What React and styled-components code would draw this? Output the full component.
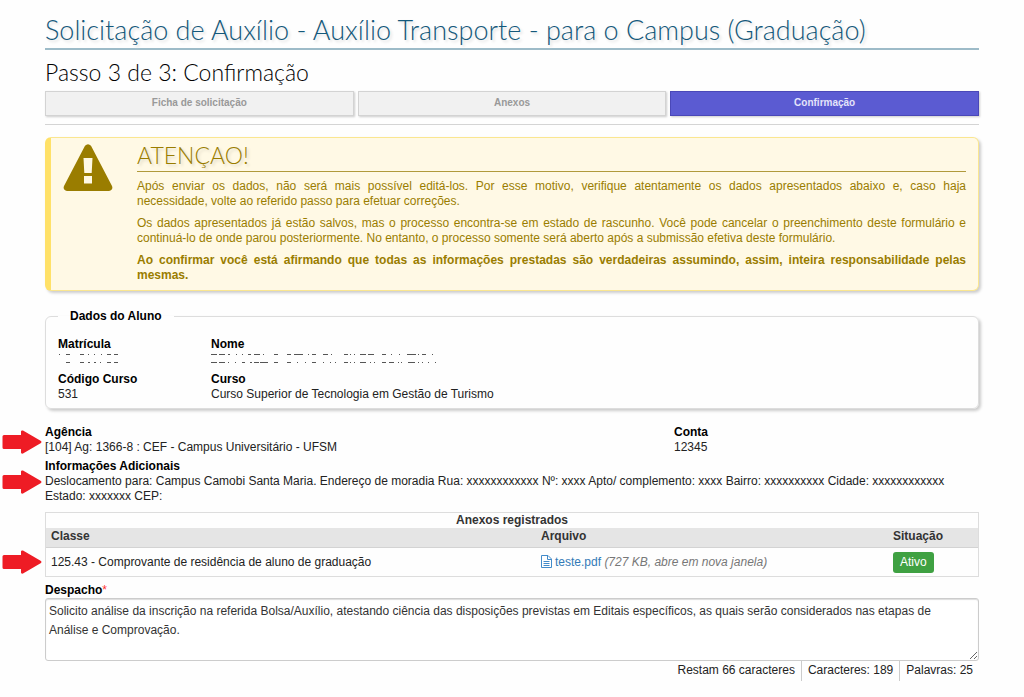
import { useState } from "react";
import styled, { createGlobalStyle } from "styled-components";

const DESPACHO =
  "Solicito análise da inscrição na referida Bolsa/Auxílio, atestando ciência das disposições previstas em Editais específicos, as quais serão considerados nas etapas de Análise e Comprovação.";

const LIMIT = 255;

const steps = ["Ficha de solicitação", "Anexos", "Confirmação"];

const attachments = [
  {
    id: 1,
    type: "125.43 - Comprovante de residência de aluno de graduação",
    file: "teste.pdf",
    info: "(727 KB, abre em nova janela)",
    status: "Ativo",
  },
];

const Arrow = () => (
  <ArrowIcon viewBox="0 0 40 24" aria-hidden="true">
    <path
      d="M2 5h17V1.500Q19 0 21 .5L39 11q1 1 0 2L21 23.500q-2 .5-2-1V19H2q-1.500 0-1.500-1.500v-11Q.5 5 2 5z"
      fill="#ee1c25"
    />
  </ArrowIcon>
);

const FileIcon = () => (
  <FileSvg viewBox="0 0 11 13" aria-hidden="true">
    <path d="M.5.5h6.500l3.500 3.500v8.500H.5z" fill="#fff" stroke="#428bca" />
    <path d="M6.500.5V4.500h4M2.500 6.500h6M2.500 8.500h6M2.500 10.500h6" fill="none" stroke="#428bca" />
  </FileSvg>
);

const App = () => {
  const [text, setText] = useState(DESPACHO);
  const words = text.split(/\s+/).filter(Boolean).length;

  return (
    <Page>
      <GlobalStyle />
      <Title>Solicitação de Auxílio - Auxílio Transporte - para o Campus (Graduação)</Title>
      <Subtitle>Passo 3 de 3: Confirmação</Subtitle>
      <Steps>
        {steps.map((step, i) => (
          <Step key={step} type="button" $active={i === 2}>{step}</Step>
        ))}
      </Steps>

      <Alert role="alert">
        <WarningIcon viewBox="0 0 50 47" aria-hidden="true">
          <path
            fillRule="evenodd"
            d="M22 1.800Q25-1.500 28 1.800L49 42q1.500 4-3 5H4q-4.500-1-3-5zM20.500 14l.8 15h7.400l.8-15zM21 32v7.500h8V32z"
            fill="#9a7d00"
          />
        </WarningIcon>
        <AlertBody>
          <AlertTitle>ATENÇAO!</AlertTitle>
          <AlertText>
            Após enviar os dados, não será mais possível editá-los. Por esse motivo, verifique
            atentamente os dados apresentados abaixo e, caso haja necessidade,&nbsp;volte ao
            referido passo para efetuar correções.
          </AlertText>
          <AlertText>
            Os dados apresentados já estão salvos, mas o processo encontra-se em estado de
            rascunho. Você pode cancelar o preenchimento deste formulário e continuá-lo de onde
            parou posteriormente. No entanto, o processo somente será aberto após a submissão
            efetiva deste formulário.
          </AlertText>
          <AlertText $bold>
            Ao confirmar você está afirmando que todas as informações prestadas são verdadeiras
            assumindo, assim, inteira responsabilidade pelas mesmas.
          </AlertText>
        </AlertBody>
      </Alert>

      <Fieldset>
        <Legend>Dados do Aluno</Legend>
        <StudentGrid>
          <Field>
            <dt>Matrícula</dt>
            <dd>
              <Redacted $width={62} viewBox="0 0 62 15" aria-hidden="true">
                <path d="M1 2.500h1M8 2.500h4M22 2.500h4M30 2.500h1M36 2.500h1M43 2.500h1M49 2.500h4M56 2.500h4M8 10.500h4M22 10.500h4M30 10.500h2M36 10.500h2M42 10.500h1M49 10.500h4M56 10.500h4" />
              </Redacted>
            </dd>
          </Field>
          <Field>
            <dt>Nome</dt>
            <dd>
              <Redacted $width={228} viewBox="0 0 228 15" aria-hidden="true">
                <path d="M0 2.500h6M8 2.500h6M17 2.500h2M25 2.500h1M31 2.500h1M37 2.500h3M43 2.500h6M52 2.500h1M63 2.500h4M76 2.500h4M83 2.500h9M97 2.500h1M101 2.500h4M112 2.500h5M120 2.500h1M133 2.500h4M139 2.500h1M143 2.500h1M149 2.500h6M157 2.500h6M171 2.500h4M180 2.500h1M188 2.500h1M196 2.500h9M207 2.500h1M211 2.500h4M221 2.500h1" />
                <path d="M0 10.500h6M8 10.500h6M17 10.500h1M24 10.500h1M31 10.500h3M39 10.500h2M43 10.500h5M49 10.500h8M63 10.500h4M76 10.500h4M86 10.500h1M94 10.500h1M101 10.500h4M112 10.500h1M119 10.500h1M124 10.500h1M133 10.500h4M139 10.500h1M143 10.500h1M149 10.500h6M159 10.500h1M163 10.500h1M171 10.500h4M178 10.500h5M187 10.500h1M190 10.500h1M197 10.500h7M207 10.500h1M211 10.500h1M217 10.500h1M224 10.500h1" />
              </Redacted>
            </dd>
          </Field>
          <Field>
            <dt>Código Curso</dt>
            <dd>531</dd>
          </Field>
          <Field>
            <dt>Curso</dt>
            <dd>Curso Superior de Tecnologia em Gestão de Turismo</dd>
          </Field>
        </StudentGrid>
      </Fieldset>

      <BankRow>
        <BankField>
          <Arrow />
          <dt>Agência</dt>
          <dd>[104] Ag: 1366-8 : CEF - Campus Universitário - UFSM</dd>
        </BankField>
        <BankField>
          <dt>Conta</dt>
          <dd>12345</dd>
        </BankField>
      </BankRow>
      <InfoRow>
        <Field>
          <Arrow />
          <dt>Informações Adicionais</dt>
          <dd>
            Deslocamento para: Campus Camobi Santa Maria. Endereço de moradia Rua: xxxxxxxxxxxx Nº:
            xxxx Apto/ complemento: xxxx Bairro: xxxxxxxxxx Cidade: xxxxxxxxxxxx Estado: xxxxxxx
            CEP:
          </dd>
        </Field>
      </InfoRow>

      <Table>
        <caption>Anexos registrados</caption>
        <colgroup>
          <ClassCol />
          <col />
          <StatusCol />
        </colgroup>
        <thead>
          <tr>
            <th>Classe</th>
            <th>Arquivo</th>
            <th>Situação</th>
          </tr>
        </thead>
        <tbody>
          {attachments.map((item) => (
            <tr key={item.id}>
              <td>
                <Arrow />
                {item.type}
              </td>
              <td>
                <FileLink href="#teste"><FileIcon />{item.file}</FileLink> <FileInfo>{item.info}</FileInfo>
              </td>
              <td><Badge>{item.status}</Badge></td>
            </tr>
          ))}
        </tbody>
      </Table>

      <Label htmlFor="despacho">Despacho<Required>*</Required></Label>
      <TextArea id="despacho" value={text} onChange={(e) => setText(e.target.value)} />
      <Counters>
        <Counter>Restam {LIMIT - text.length} caracteres</Counter>
        <Counter>Caracteres: {text.length}</Counter>
        <Counter>Palavras: {words}</Counter>
      </Counters>
    </Page>
  );
};

const GlobalStyle = createGlobalStyle`
  * {
    box-sizing: border-box;
  }
  body {
    margin: 0;
    background: #fefefe;
    color: #222;
    font-family: "Liberation Sans", Arial, sans-serif;
    font-size: 12px;
    line-height: 15px;
  }
`;

const Page = styled.main`
  padding: 12px 45px;
`;

const Title = styled.h1`
  margin: 0;
  border-bottom: 2px solid #9dbbc8;
  color: #14587a;
  font-family: Lato, Optima, sans-serif;
  font-size: 27px;
  font-weight: 300;
  line-height: 36px;
  text-shadow: 2px 2px 3px #ddd;
`;

const Subtitle = styled.h2`
  margin: 7px 0 4px;
  color: #000;
  font-family: Lato, Optima, sans-serif;
  font-size: 23px;
  font-weight: 300;
  line-height: 30px;
`;

const Steps = styled.nav`
  display: grid;
  grid-template-columns: repeat(3, 1fr);
  gap: 4px;
  padding-bottom: 8px;
  border-bottom: 1px solid #d4d4d4;
`;

const Step = styled.button`
  height: 25px;
  padding: 0 0 2px;
  border: 1px solid ${(p) => (p.$active ? "#4a48b8" : "#d3d3d3")};
  background: ${(p) => (p.$active ? "#5b5bd2" : "#f1f1f1")};
  color: ${(p) => (p.$active ? "#e4e4fa" : "#999")};
  box-shadow: 1px 1px 2px #ccc;
  font-family: inherit;
  font-size: 10px;
  font-weight: bold;
`;

const Alert = styled.section`
  display: flex;
  margin-top: 12px;
  padding: 5px 12px 0;
  border: 1px solid #fae690;
  border-left: 6px solid #ffe168;
  border-radius: 6px;
  background: #fff9e5;
  box-shadow: 2px 2px 3px #ccc;
  color: #9a7d00;
`;

const WarningIcon = styled.svg`
  flex: none;
  width: 50px;
  height: 47px;
  margin: 1px 24px 0 0;
`;

const AlertBody = styled.div`
  flex: 1;
`;

const AlertTitle = styled.h3`
  margin: 0 0 7px;
  padding-bottom: 4px;
  border-bottom: 1px solid #b09a3c;
  font-family: Lato, Optima, sans-serif;
  font-size: 23px;
  font-weight: 300;
  line-height: 24px;
  text-shadow: 2px 2px 3px #ddd8c4;
`;

const AlertText = styled.p`
  margin: 0 0 7px;
  font-weight: ${(p) => (p.$bold ? "bold" : "normal")};
  text-align: justify;
`;

const Fieldset = styled.fieldset`
  min-width: 0;
  margin: 18px 0 0;
  padding: 13px 12px 6px;
  border: 1px solid #ddd;
  border-radius: 6px;
  box-shadow: 2px 2px 3px #ccc;
`;

const Legend = styled.legend`
  padding: 0 12px;
  color: #000;
  font-weight: bold;
`;

const StudentGrid = styled.dl`
  display: grid;
  grid-template-columns: 153px 1fr;
  row-gap: 5px;
  margin: 0;
`;

const Field = styled.div`
  position: relative;

  dt {
    color: #000;
    font-weight: bold;
  }
  dd {
    margin: 0;
  }
`;

const BankField = styled(Field)`
  padding-bottom: 4px;
`;

const Redacted = styled.svg`
  display: block;
  width: ${(p) => p.$width}px;
  height: 15px;
  fill: none;
  stroke: #555;
`;

const BankRow = styled.dl`
  display: grid;
  grid-template-columns: 629fr 305fr;
  margin: 16px 0 0;
`;

const InfoRow = styled.dl`
  margin: 0 0 8px;
`;

const ArrowIcon = styled.svg`
  position: absolute;
  top: 50%;
  left: -43px;
  width: 40px;
  height: 24px;
  transform: translateY(-50%);
`;

const Table = styled.table`
  width: 100%;
  table-layout: fixed;
  border-collapse: collapse;
  outline: 1px solid #ddd;
  outline-offset: -1px;

  caption {
    border: 1px solid #ddd;
    border-bottom: none;
    color: #333;
    font-weight: bold;
  }
  th {
    padding: 1px 6px 3px;
    border-bottom: 1px solid #d3d3d3;
    background: #e5e5e5;
    color: #333;
    text-align: left;
  }
  td {
    position: relative;
    height: 29px;
    padding: 0 6px;
  }
`;

const ClassCol = styled.col`
  width: 490px;
`;

const StatusCol = styled.col`
  width: 92px;
`;

const FileLink = styled.a`
  color: #337ab7;
  text-decoration: none;
`;

const FileSvg = styled.svg`
  width: 11px;
  height: 13px;
  margin-right: 3px;
  vertical-align: -2px;
`;

const FileInfo = styled.em`
  color: #777;
`;

const Badge = styled.span`
  display: inline-block;
  padding: 3px 7px;
  border-radius: 3px;
  background: #3fa142;
  color: #fff;
`;

const Label = styled.label`
  display: block;
  margin: 6px 0 0;
  color: #000;
  font-weight: bold;
`;

const Required = styled.span`
  color: #f33;
  font-weight: normal;
`;

const TextArea = styled.textarea`
  display: block;
  width: 100%;
  height: 63px;
  padding: 3px 6px 3px 3px;
  border: 1px solid #ccc;
  border-radius: 3px;
  background: #fff;
  box-shadow: inset 0 1px 1px #ddd;
  color: #333;
  font: inherit;
  line-height: 19px;
  resize: vertical;
`;

const Counters = styled.div`
  display: flex;
  justify-content: flex-end;
`;

const Counter = styled.span`
  padding: 2px 6px 3px;

  & + & {
    border-left: 1px solid #ccc;
  }
`;

export default App;
